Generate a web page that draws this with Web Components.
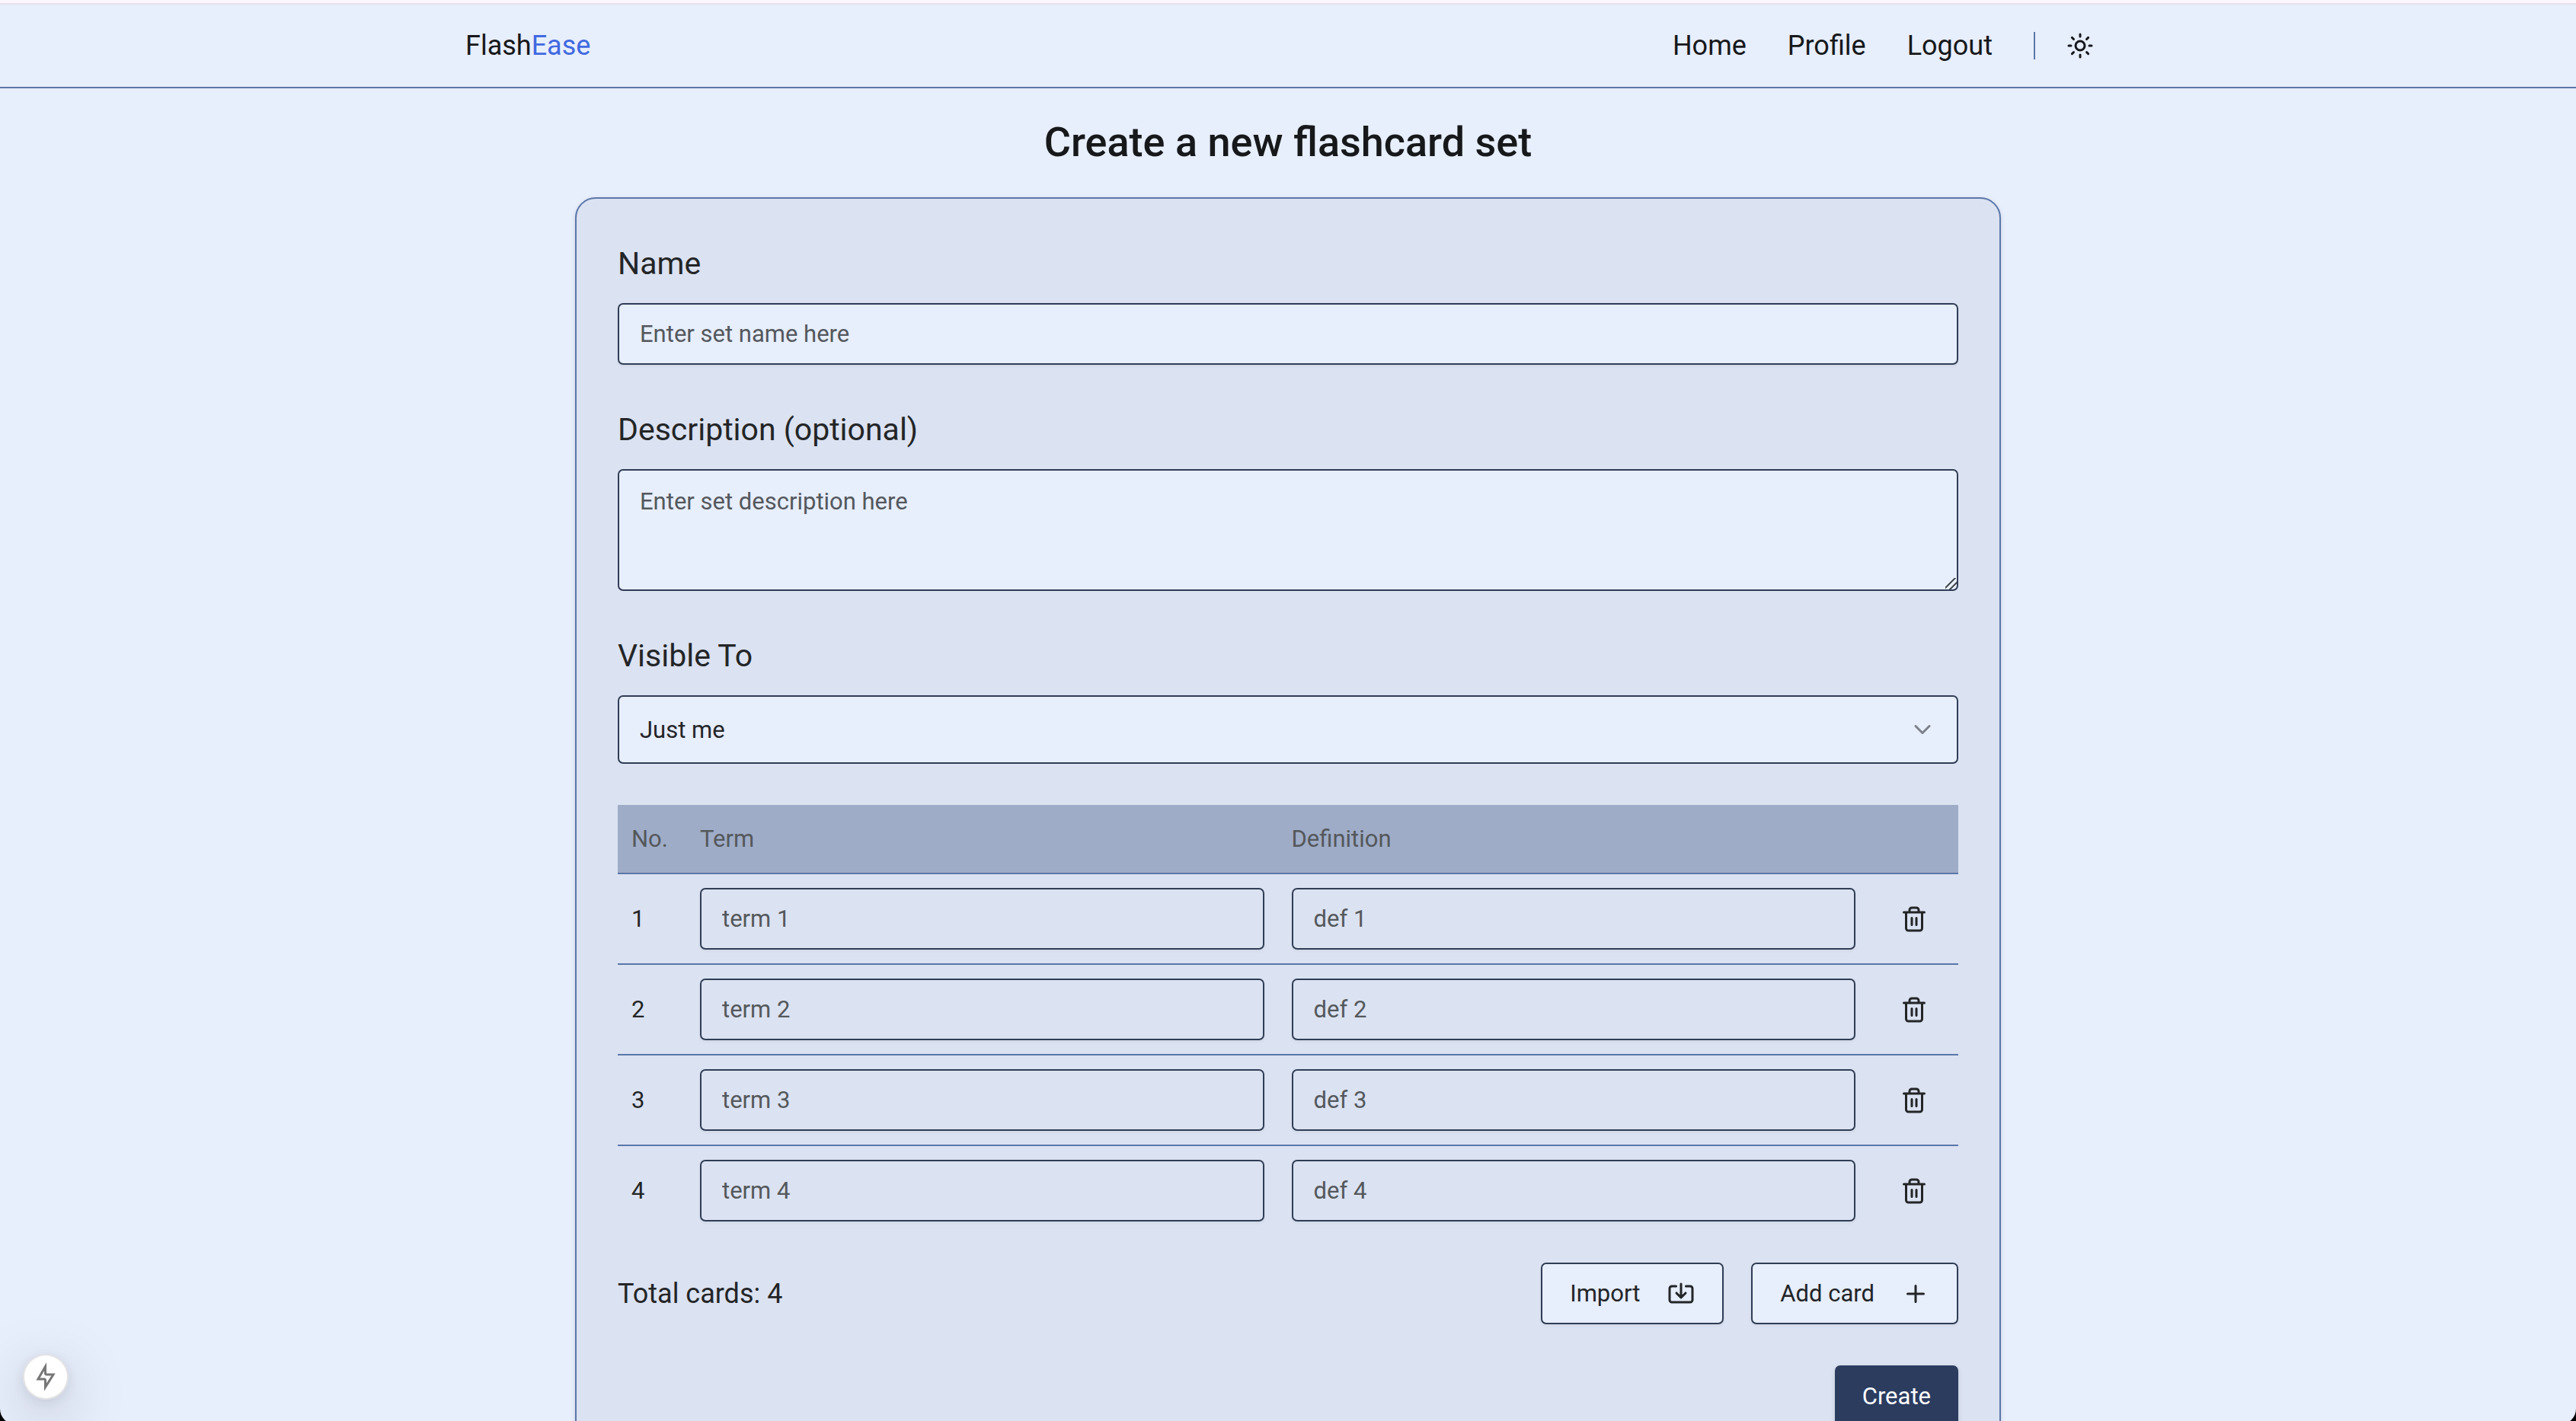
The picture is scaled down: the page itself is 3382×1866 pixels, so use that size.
<!DOCTYPE html>
<html lang="en">
<head>
<meta charset="utf-8">
<meta name="viewport" content="width=device-width, initial-scale=1">
<title>FlashEase</title>
<style>
  html { background: #000; height: 100%; }
  body {
    --bg: #e7eefc;
    --panel: #dbe2f1;
    --line: #5b77a9;
    --ink: #16181a;
    --field-line: #303d55;
    --muted: #54585c;
    --fs-sm: 31px;
    --fs-md: 36px;
    --fs-lg: 41px;
    --fs-xl: 54px;
    margin: 0;
    height: 100%;
    overflow: hidden;
    font-family: Roboto, "Liberation Sans", sans-serif;
    color: var(--ink);
  }
</style>
</head>
<body>
<app-shell>
  <site-header slot="header">
    <a slot="nav" href="#home">Home</a>
    <a slot="nav" href="#profile">Profile</a>
    <a slot="nav" href="#logout">Logout</a>
  </site-header>
  <set-form>Create a new flashcard set</set-form>
  <dev-indicator slot="overlay"></dev-indicator>
</app-shell>

<script>
const define = (name, html, setup) => {
  const template = document.createElement('template');
  template.innerHTML = '<style>*,*::before,*::after{box-sizing:border-box}</style>' + html;
  customElements.define(name, class extends HTMLElement {
    constructor() {
      super();
      this.attachShadow({ mode: 'open' }).append(template.content.cloneNode(true));
    }
    connectedCallback() { if (setup) setup(this, this.shadowRoot); }
  });
};

const ICONS = {
  sun: '<circle cx="12" cy="12" r="4"/><path d="M12 2v2M12 20v2M4.93 4.93l1.41 1.41M17.66 17.66l1.41 1.41M2 12h2M20 12h2M6.34 17.66l-1.41 1.41M19.07 4.93l-1.41 1.41"/>',
  chevron: '<path d="M6 9l6 6 6-6"/>',
  plus: '<path d="M5 12h14M12 5v14"/>',
  trash: '<path d="M3 6h18M19 6v14a2 2 0 0 1-2 2H7a2 2 0 0 1-2-2V6M8 6V4a2 2 0 0 1 2-2h4a2 2 0 0 1 2 2v2M10 11v6M14 11v6"/>',
  import: '<path d="M7.700 5.300H4a2 2 0 0 0-2 2v10a2 2 0 0 0 2 2h16a2 2 0 0 0 2-2v-10a2 2 0 0 0-2-2h-3.700M12 3.300v12M8 11.300l4 4 4-4"/>'
};

define('ui-icon', `
  <style>
    :host { display: block; width: 36px; height: 36px; flex: none; }
    svg { display: block; width: 100%; height: 100%; fill: none; stroke: currentColor; stroke-width: 2; stroke-linecap: round; stroke-linejoin: round; overflow: visible; }
  </style>
  <svg viewBox="0 0 24 24" aria-hidden="true"></svg>`,
  (host, root) => { root.querySelector('svg').innerHTML = ICONS[host.getAttribute('name')]; });

define('app-shell', `
  <style>
    :host { display: block; height: 100%; background: var(--bg); border-top: 4px solid #fcf7fc; border-radius: 0 0 20px 20px; overflow: hidden; }
    .edge { height: 2px; background: #e6e0ec; }
    main { padding: 35px 36px 0; }
  </style>
  <div class="edge"></div>
  <slot name="header"></slot>
  <main><slot></slot></main>
  <slot name="overlay"></slot>`);

define('site-header', `
  <style>
    :host { display: block; border-bottom: 2px solid var(--line); font-size: var(--fs-md); }
    .bar { max-width: 2160px; height: 108px; margin: 0 auto; display: flex; align-items: center; justify-content: space-between; }
    .brand { color: inherit; text-decoration: none; }
    .brand span { color: #4169e1; }
    nav { display: flex; align-items: center; gap: 54px; }
    ::slotted(a) { color: inherit; text-decoration: none; }
    .tools { display: flex; align-items: center; gap: 18px; }
    .rule { width: 2px; height: 36px; background: var(--line); }
    button { width: 81px; height: 81px; padding: 0; border: 0; background: none; color: inherit; display: grid; place-items: center; }
  </style>
  <div class="bar">
    <a class="brand" href="#home">Flash<span>Ease</span></a>
    <nav>
      <slot name="nav"></slot>
      <div class="tools">
        <div class="rule"></div>
        <button type="button" aria-label="Toggle theme"><ui-icon name="sun"></ui-icon></button>
      </div>
    </nav>
  </div>`);

define('ui-button', `
  <style>
    :host { display: block; }
    button { height: 81px; padding: 0 36px; display: flex; align-items: center; gap: 36px; border: 2px solid var(--field-line); border-radius: 7px; background: var(--bg); color: #232527; font: inherit; font-size: var(--fs-sm); box-shadow: 0 2px 4px rgb(0 0 0 / .05); }
    :host([primary]) button { border: 0; background: #2b3c5f; color: #fff; box-shadow: 0 2px 6px rgb(0 0 0 / .12); }
  </style>
  <button type="button"><slot></slot><slot name="icon"></slot></button>`);

define('form-field', `
  <style>
    :host { display: grid; gap: 20px; }
    label { font-size: var(--fs-lg); line-height: 63px; color: #232527; }
    input, textarea, select { display: block; width: 100%; margin: 0; border: 2px solid var(--field-line); border-radius: 7px; background: var(--bg); color: #232527; font: inherit; font-size: var(--fs-sm); line-height: 45px; padding: 0 27px; }
    input { height: 81px; box-shadow: 0 2px 4px rgb(0 0 0 / .05); }
    textarea { height: 160px; padding-top: 18px; resize: vertical; }
    textarea::-webkit-resizer { background: linear-gradient(135deg, transparent 8px, #4c5156 8px 10px, transparent 10px 14px, #4c5156 14px 16px, transparent 16px); }
    select { height: 90px; appearance: none; }
    ::placeholder { color: var(--muted); opacity: 1; }
    .pick { display: grid; align-items: center; }
    .pick > * { grid-area: 1 / 1; }
    .pick ui-icon { justify-self: end; margin-right: 29px; opacity: .5; pointer-events: none; }
  </style>
  <label for="control"></label>`,
  (host, root) => {
    root.querySelector('label').textContent = host.getAttribute('label');
    const kind = host.getAttribute('kind');
    const control = document.createElement(kind);
    control.id = 'control';
    if (kind === 'select') {
      control.add(new Option(host.getAttribute('value')));
      control.add(new Option('Everyone'));
      const box = document.createElement('div');
      const icon = document.createElement('ui-icon');
      icon.setAttribute('name', 'chevron');
      box.className = 'pick';
      box.append(control, icon);
      root.append(box);
    } else {
      control.placeholder = host.getAttribute('hint');
      root.append(control);
    }
  });

define('card-table', `
  <style>
    :host { display: block; font-size: var(--fs-sm); line-height: 45px; }
    table { width: 100%; border-collapse: separate; border-spacing: 0; table-layout: fixed; }
    .no { width: 90px; }
    .act { width: 117px; }
    th { height: 91px; padding: 0 18px; text-align: left; font-weight: 400; color: var(--muted); background: #9facc7; border-bottom: 2px solid var(--line); }
    td { padding: 18px; color: #232527; border-bottom: 2px solid var(--line); }
    tr:last-child td { border-bottom: 0; }
    input { display: block; width: 100%; height: 81px; margin: 0; padding: 0 27px; border: 2px solid var(--field-line); border-radius: 7px; background: transparent; font: inherit; color: inherit; box-shadow: 0 2px 4px rgb(0 0 0 / .05); }
    ::placeholder { color: var(--muted); opacity: 1; }
    button { width: 81px; height: 81px; padding: 0; border: 0; background: none; color: inherit; display: grid; place-items: center; }
  </style>
  <table>
    <colgroup><col class="no"><col><col><col class="act"></colgroup>
    <thead><tr><th>No.</th><th>Term</th><th>Definition</th><th></th></tr></thead>
    <tbody></tbody>
  </table>`,
  (host, root) => {
    root.querySelector('tbody').innerHTML = Array.from({ length: +host.getAttribute('rows') }, (_, i) => `
      <tr><td>${i + 1}</td>
        <td><input aria-label="Term ${i + 1}" placeholder="term ${i + 1}"></td>
        <td><input aria-label="Definition ${i + 1}" placeholder="def ${i + 1}"></td>
        <td><button type="button" aria-label="Delete card ${i + 1}"><ui-icon name="trash"></ui-icon></button></td></tr>`).join('');
  });

define('set-form', `
  <style>
    :host { display: block; max-width: 1872px; margin: 0 auto; }
    h1 { margin: 0 0 36px; text-align: center; font-size: var(--fs-xl); line-height: 72px; font-weight: 500; }
    form { padding: 54px; display: grid; gap: 54px; border: 2px solid var(--line); border-radius: 27px; background: var(--panel); box-shadow: 0 2px 6px rgb(0 0 0 / .1), 0 2px 4px -2px rgb(0 0 0 / .1); }
    .cards { display: grid; gap: 36px; }
    .row { display: flex; align-items: center; gap: 36px; }
    .total { flex: 1; font-size: var(--fs-md); color: #232527; }
    .end { justify-content: flex-end; }
  </style>
  <h1><slot></slot></h1>
  <form>
    <form-field kind="input" label="Name" hint="Enter set name here"></form-field>
    <form-field kind="textarea" label="Description (optional)" hint="Enter set description here"></form-field>
    <form-field kind="select" label="Visible To" value="Just me"></form-field>
    <div class="cards">
      <card-table rows="4"></card-table>
      <div class="row">
        <div class="total">Total cards: 4</div>
        <ui-button>Import<ui-icon slot="icon" name="import"></ui-icon></ui-button>
        <ui-button>Add card<ui-icon slot="icon" name="plus"></ui-icon></ui-button>
      </div>
    </div>
    <div class="row end"><ui-button primary>Create</ui-button></div>
  </form>`);

define('dev-indicator', `
  <style>
    :host { position: fixed; left: 32px; bottom: 30px; width: 56px; height: 56px; border-radius: 50%; background: #fff; display: grid; place-items: center; box-shadow: 0 0 0 2px #e3e3e6, 0 22px 80px rgb(0 0 0 / .25), 0 4px 20px rgb(0 0 0 / .12); }
    svg { width: 26px; height: 32px; display: block; overflow: visible; }
  </style>
  <svg viewBox="0 0 26 32" fill="none" stroke="#777" stroke-width="3" aria-hidden="true"><path d="M12.500 2.500L3 19h8q1.500 0 1.500 1.500v9L23 13h-8.500q-2 0-2-2z"/></svg>`);
</script>
</body>
</html>
